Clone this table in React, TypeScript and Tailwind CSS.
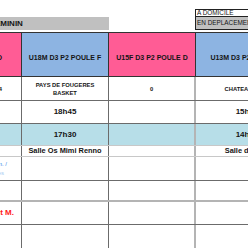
const font = "font-['Liberation_Sans',Arial,sans-serif]"

type Cells = [React.ReactNode, React.ReactNode, React.ReactNode, React.ReactNode]

function Row({ cls, cells, head }: { cls: string; cells: Cells; head?: boolean }) {
  const line = head ? 'border-[#333]' : 'border-[#6b6b6b]'
  const mid = head ? 'border-r border-[#333]' : 'border-r-2 border-[#b4b4b4]'
  return (
    <div className={`grid grid-cols-[87px_87px_87px_102px] ${cls}`}>
      <div className={`flex items-center justify-end pr-[19px] overflow-hidden whitespace-nowrap border-r ${line} ${head ? 'bg-[#ff5c95]' : ''}`}>
        {cells[0]}
      </div>
      <div className={`flex items-center justify-center text-center overflow-hidden whitespace-nowrap border-r ${line} ${head ? 'bg-[#8db4e2]' : ''}`}>
        {cells[1]}
      </div>
      <div className={`flex items-center justify-center text-center overflow-hidden whitespace-nowrap ${mid} ${head ? 'bg-[#ff5c95]' : ''}`}>
        {cells[2]}
      </div>
      <div className={`flex items-center justify-center text-center overflow-hidden whitespace-nowrap ${head ? 'bg-[#8db4e2]' : ''}`}>
        {cells[3]}
      </div>
    </div>
  )
}

export default function App() {
  const hd = 'text-[7px] font-bold leading-none pt-[5px]'
  const team = 'text-[5.8px] font-bold leading-[8px]'
  const hour = 'text-[8px] font-bold leading-none'
  const salle = 'text-[7.4px] font-bold leading-none'

  return (
    <div className={`w-[248px] h-[248px] overflow-hidden bg-white text-[#151515] ${font}`}>
      <div className="ml-[-65px] w-[363px]">
        {/* titre + legende */}
        <div className="flex h-[32px]">
          <div className="w-[174px] pt-[17px]">
            <div className="h-[13px] bg-[#c0c0c0] flex items-center pl-[55px] text-[8px] font-bold leading-none whitespace-nowrap">
              FEMININ
            </div>
          </div>
          <div className="w-[86px]" />
          <div className="w-[103px] pt-[9px] pb-[2px] flex flex-col">
            <div className="h-[8px] border-l border-t border-b border-[#222] bg-white flex items-center pl-[1px] text-[6.4px] leading-none whitespace-nowrap">
              A DOMICILE
            </div>
            <div className="flex-1 border-l border-b border-[#222] bg-[#c0c0c0] flex items-center pl-[1px] text-[6.4px] leading-none whitespace-nowrap">
              EN DEPLACEMENT
            </div>
          </div>
        </div>

        <Row
          head
          cls="h-[45px] border-t border-b border-[#333]"
          cells={[
            <span className={hd}>U11F POULE D</span>,
            <span className={hd}>U18M D3 P2 POULE F</span>,
            <span className={hd}>U15F D3 P2 POULE D</span>,
            <span className={hd}>U13M D3 P2 POULE B</span>,
          ]}
        />
        <Row
          cls="h-[24px] border-b border-[#6b6b6b]"
          cells={[
            <span className={team}>AS VITRE 4</span>,
            <span className={team}>PAYS DE FOUGERES<br />BASKET</span>,
            <span className={team}>0</span>,
            <span className={`${team} pl-[2px]`}>CHATEAUGIRON</span>,
          ]}
        />
        <Row
          cls="h-[23px] border-b border-[#6b6b6b]"
          cells={[
            <span className={hour}></span>,
            <span className={hour}>18h45</span>,
            <span className={hour}></span>,
            <span className={hour}>15h00</span>,
          ]}
        />
        <Row
          cls="h-[22px] bg-[#b7dee8] border-b border-[#c8c8c8]"
          cells={[
            <span className={hour}></span>,
            <span className={hour}>17h30</span>,
            <span className={hour}></span>,
            <span className={hour}>14h00</span>,
          ]}
        />
        <Row
          cls="h-[11px] border-b border-[#c8c8c8]"
          cells={[
            <span className={salle}></span>,
            <span className={salle}>Salle Os Mimi Renno</span>,
            <span className={salle}></span>,
            <span className={`${salle} pl-[2px]`}>Salle du Parc</span>,
          ]}
        />
        <Row
          cls="h-[24px] border-b border-[#6b6b6b]"
          cells={[
            <span className="text-[6px] leading-[9px] text-[#3b8ee8] text-right mr-[-5px]">
              Gymnase J. Moulin. /<br /><span className="text-[#a9cdf3] mr-[3px]">Rennes</span>
            </span>,
            <span></span>,
            <span></span>,
            <span></span>,
          ]}
        />
        <Row
          cls="h-[21px] border-b-2 border-[#b4b4b4]"
          cells={[<span></span>, <span></span>, <span></span>, <span></span>]}
        />
        <Row
          cls="h-[23px] border-b border-[#6b6b6b]"
          cells={[
            <span className="text-[8px] font-bold leading-none text-[#ff1a1a] mr-[-12px]">Arbitre : Saint M.</span>,
            <span></span>,
            <span></span>,
            <span></span>,
          ]}
        />
        <Row
          cls="h-[23px]"
          cells={[<span></span>, <span></span>, <span></span>, <span></span>]}
        />
      </div>
    </div>
  )
}
